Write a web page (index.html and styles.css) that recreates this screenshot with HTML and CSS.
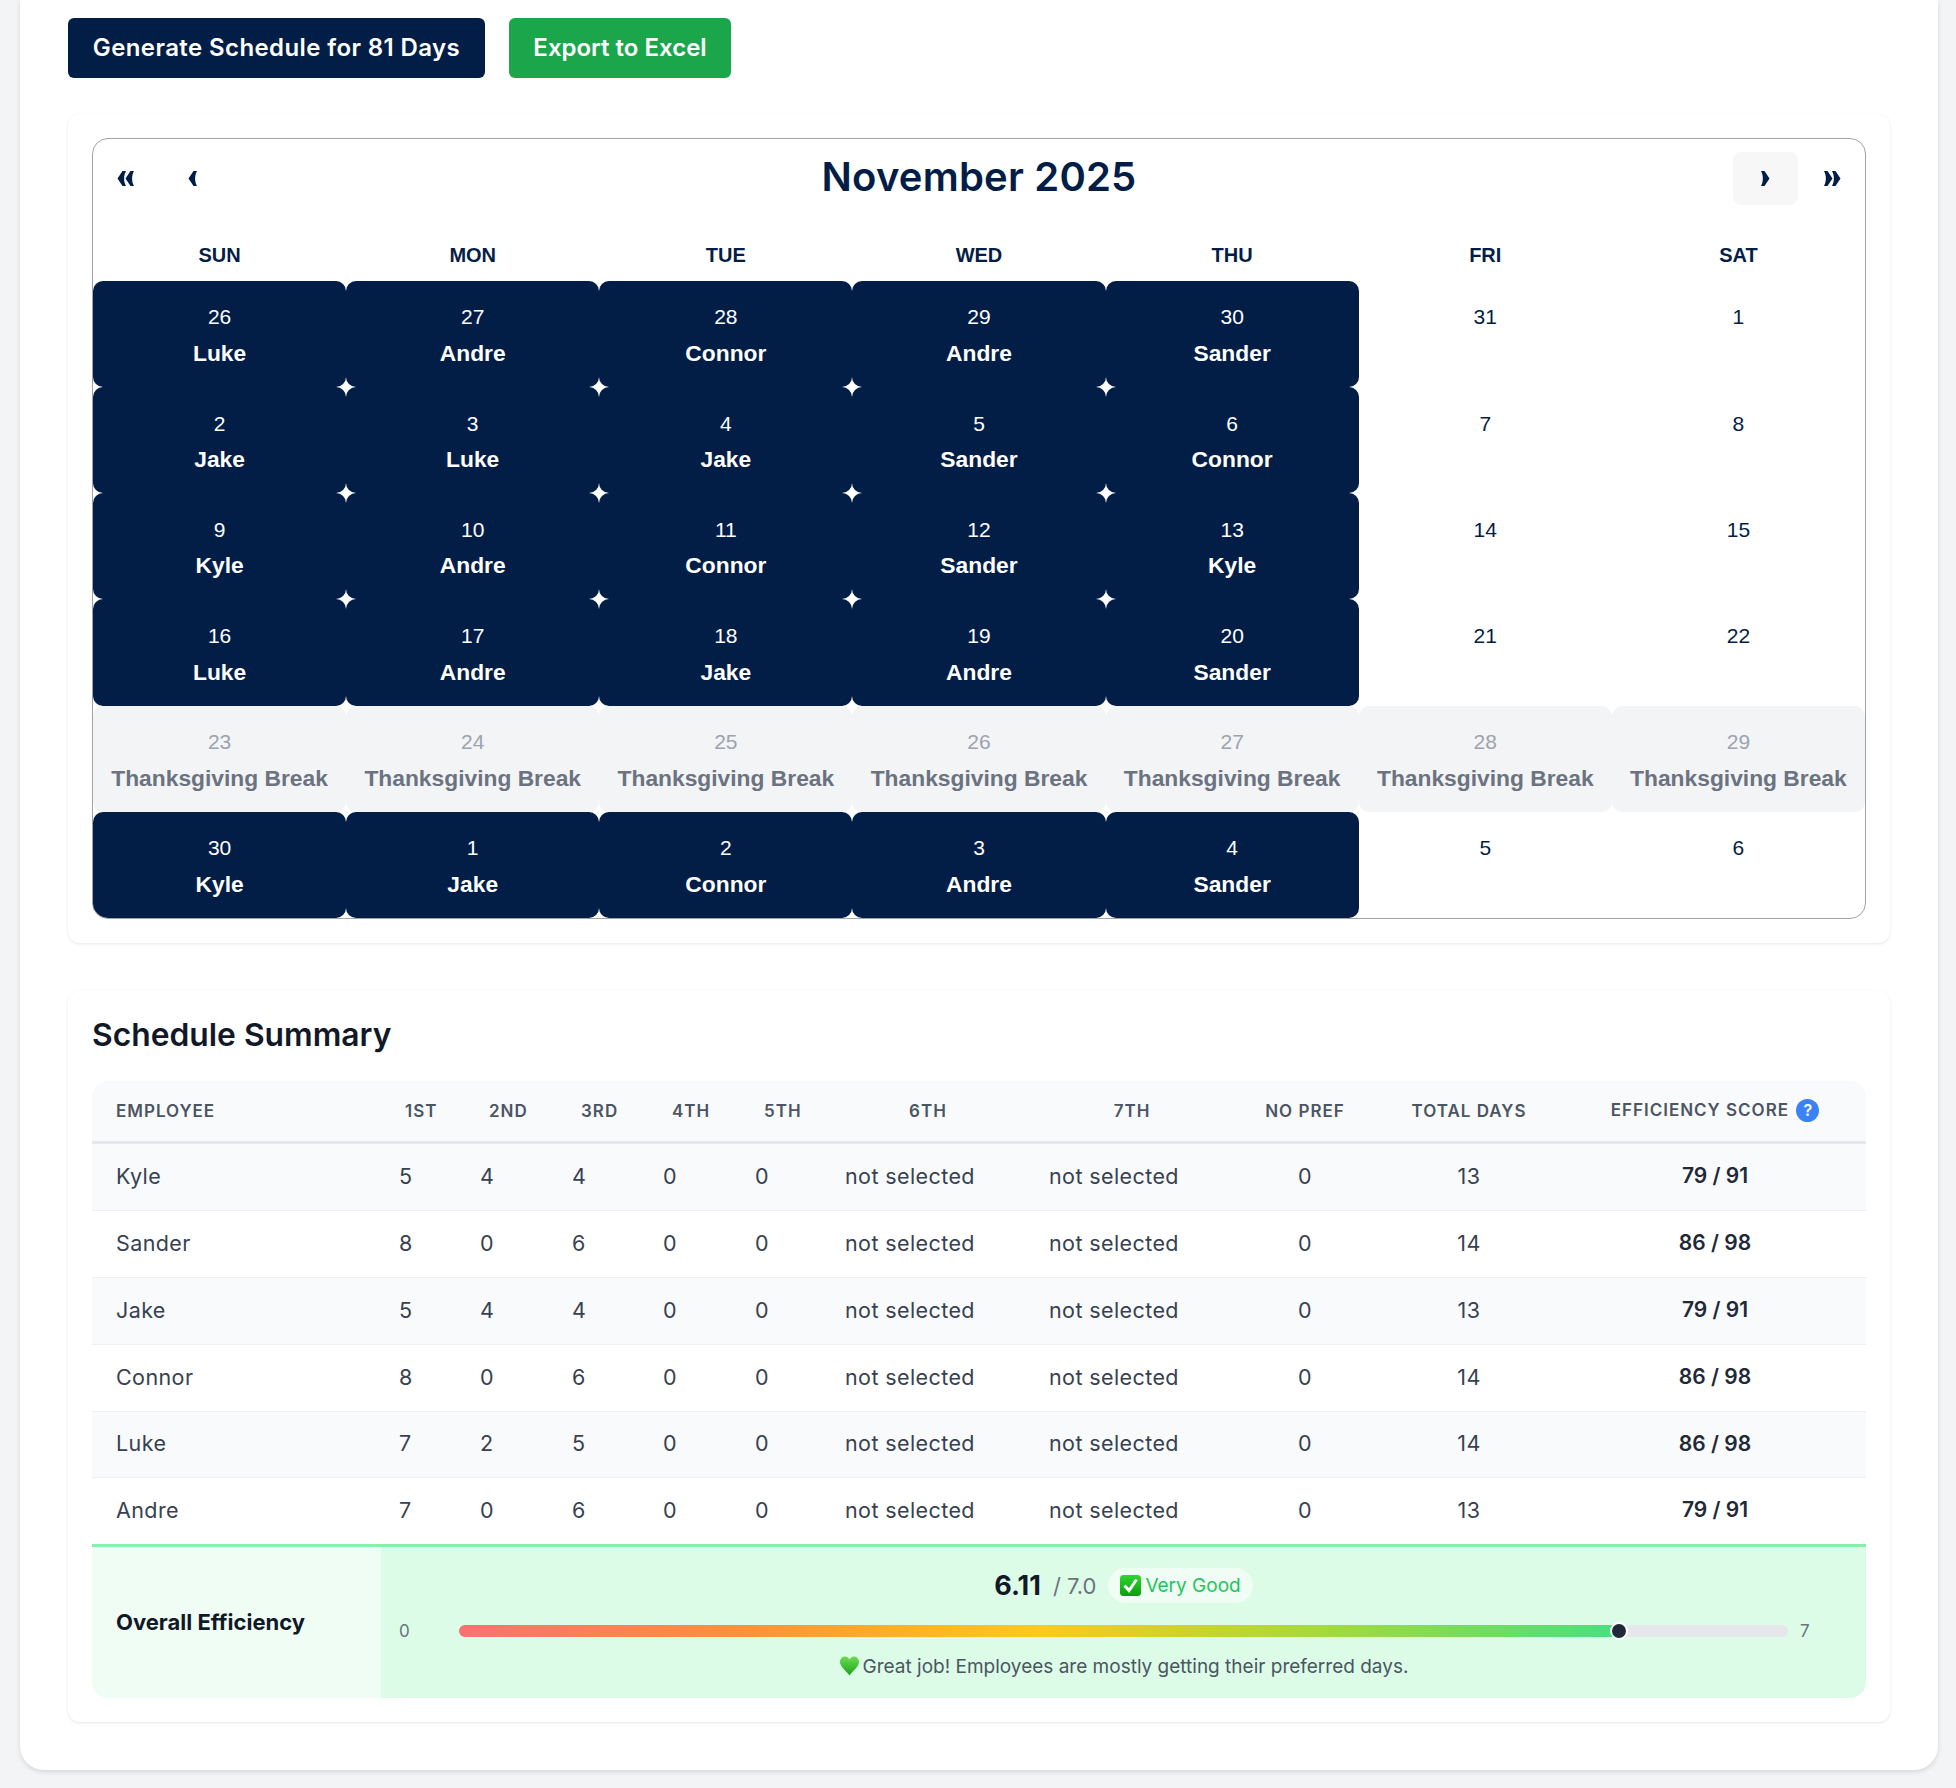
FILE: index.html
```html
<!DOCTYPE html>
<html lang="en">
<head>
    <meta charset="UTF-8">
    <meta name="viewport" content="width=device-width, initial-scale=1.0">
    <title>Schedule</title>
    <link rel="stylesheet" href="styles.css">
</head>
<body>
<div class="page">
    <div class="actions">
        <button class="btn btn-navy">Generate Schedule for 81 Days</button>
        <button class="btn btn-green">Export to Excel</button>
    </div>

    <section class="card">
        <div class="calendar">
            <div class="cal-toolbar">
                <div class="cal-nav">
                    <button class="nav-btn"><svg width="18" height="15" viewBox="0 0 18 15"><path d="M5.500 0 L0.500 7.500 L5.500 15 H9 C6.500 11 6.500 4 9 0Z M13.500 0 L8.500 7.500 L13.500 15 H17 C14.500 11 14.500 4 17 0Z"/></svg></button>
                    <button class="nav-btn"><svg width="10" height="15" viewBox="0 0 10 15"><path d="M5.500 0 L0.500 7.500 L5.500 15 H9 C6.500 11 6.500 4 9 0Z"/></svg></button>
                </div>
                <h2 class="cal-title">November 2025</h2>
                <div class="cal-nav">
                    <button class="nav-btn nav-hover"><svg width="10" height="15" viewBox="0 0 10 15"><path d="M4.500 0 L9.500 7.500 L4.500 15 H1 C3.500 11 3.500 4 1 0Z"/></svg></button>
                    <button class="nav-btn"><svg width="18" height="15" viewBox="0 0 18 15"><path d="M4.500 0 L9.500 7.500 L4.500 15 H1 C3.500 11 3.500 4 1 0Z M12.500 0 L17.500 7.500 L12.500 15 H9 C11.500 11 11.500 4 9 0Z"/></svg></button>
                </div>
            </div>
            <div class="cal-grid">
                <div class="dow">SUN</div><div class="dow">MON</div><div class="dow">TUE</div><div class="dow">WED</div><div class="dow">THU</div><div class="dow">FRI</div><div class="dow">SAT</div>

                <div class="day on"><span>26</span><b>Luke</b></div>
                <div class="day on"><span>27</span><b>Andre</b></div>
                <div class="day on"><span>28</span><b>Connor</b></div>
                <div class="day on"><span>29</span><b>Andre</b></div>
                <div class="day on"><span>30</span><b>Sander</b></div>
                <div class="day"><span>31</span></div>
                <div class="day"><span>1</span></div>

                <div class="day on"><span>2</span><b>Jake</b></div>
                <div class="day on"><span>3</span><b>Luke</b></div>
                <div class="day on"><span>4</span><b>Jake</b></div>
                <div class="day on"><span>5</span><b>Sander</b></div>
                <div class="day on"><span>6</span><b>Connor</b></div>
                <div class="day"><span>7</span></div>
                <div class="day"><span>8</span></div>

                <div class="day on"><span>9</span><b>Kyle</b></div>
                <div class="day on"><span>10</span><b>Andre</b></div>
                <div class="day on"><span>11</span><b>Connor</b></div>
                <div class="day on"><span>12</span><b>Sander</b></div>
                <div class="day on"><span>13</span><b>Kyle</b></div>
                <div class="day"><span>14</span></div>
                <div class="day"><span>15</span></div>

                <div class="day on"><span>16</span><b>Luke</b></div>
                <div class="day on"><span>17</span><b>Andre</b></div>
                <div class="day on"><span>18</span><b>Jake</b></div>
                <div class="day on"><span>19</span><b>Andre</b></div>
                <div class="day on"><span>20</span><b>Sander</b></div>
                <div class="day"><span>21</span></div>
                <div class="day"><span>22</span></div>

                <div class="day off"><span>23</span><b>Thanksgiving Break</b></div>
                <div class="day off"><span>24</span><b>Thanksgiving Break</b></div>
                <div class="day off"><span>25</span><b>Thanksgiving Break</b></div>
                <div class="day off"><span>26</span><b>Thanksgiving Break</b></div>
                <div class="day off"><span>27</span><b>Thanksgiving Break</b></div>
                <div class="day off"><span>28</span><b>Thanksgiving Break</b></div>
                <div class="day off"><span>29</span><b>Thanksgiving Break</b></div>

                <div class="day on"><span>30</span><b>Kyle</b></div>
                <div class="day on"><span>1</span><b>Jake</b></div>
                <div class="day on"><span>2</span><b>Connor</b></div>
                <div class="day on"><span>3</span><b>Andre</b></div>
                <div class="day on"><span>4</span><b>Sander</b></div>
                <div class="day"><span>5</span></div>
                <div class="day"><span>6</span></div>
            </div>
        </div>
    </section>

    <section class="card summary">
        <h2 class="summary-title">Schedule Summary</h2>
        <div class="table-wrap">
            <table class="summary-table">
                <colgroup>
                    <col class="c-name"><col class="c1"><col class="c2"><col class="c3"><col class="c4"><col class="c5"><col class="c6"><col class="c7"><col class="c8"><col class="c9"><col class="c10">
                </colgroup>
                <thead>
                    <tr>
                        <th>Employee</th><th>1st</th><th>2nd</th><th>3rd</th><th>4th</th><th>5th</th>
                        <th class="th-pick">6th</th><th class="th-pick th-seven">7th</th>
                        <th class="mid">No Pref</th><th class="mid">Total Days</th>
                        <th class="mid">Efficiency Score <span class="help">?</span></th>
                    </tr>
                </thead>
                <tbody>
                    <tr><td>Kyle</td><td>5</td><td>4</td><td>4</td><td>0</td><td>0</td><td class="ns">not selected</td><td class="ns">not selected</td><td class="mid">0</td><td class="mid">13</td><td class="mid score">79 / 91</td></tr>
                    <tr><td>Sander</td><td>8</td><td>0</td><td>6</td><td>0</td><td>0</td><td class="ns">not selected</td><td class="ns">not selected</td><td class="mid">0</td><td class="mid">14</td><td class="mid score">86 / 98</td></tr>
                    <tr><td>Jake</td><td>5</td><td>4</td><td>4</td><td>0</td><td>0</td><td class="ns">not selected</td><td class="ns">not selected</td><td class="mid">0</td><td class="mid">13</td><td class="mid score">79 / 91</td></tr>
                    <tr><td>Connor</td><td>8</td><td>0</td><td>6</td><td>0</td><td>0</td><td class="ns">not selected</td><td class="ns">not selected</td><td class="mid">0</td><td class="mid">14</td><td class="mid score">86 / 98</td></tr>
                    <tr class="short"><td>Luke</td><td>7</td><td>2</td><td>5</td><td>0</td><td>0</td><td class="ns">not selected</td><td class="ns">not selected</td><td class="mid">0</td><td class="mid">14</td><td class="mid score">86 / 98</td></tr>
                    <tr class="short"><td>Andre</td><td>7</td><td>0</td><td>6</td><td>0</td><td>0</td><td class="ns">not selected</td><td class="ns">not selected</td><td class="mid">0</td><td class="mid">13</td><td class="mid score">79 / 91</td></tr>
                </tbody>
                <tfoot>
                    <tr>
                        <td class="eff-label">Overall Efficiency</td>
                        <td class="eff-cell" colspan="10">
                            <div class="eff-head">
                                <strong class="eff-value">6.11</strong>
                                <span class="eff-max">/ 7.0</span>
                                <span class="eff-pill">
                                    <svg width="21" height="21" viewBox="0 0 21 21">
                                        <defs><linearGradient id="boxGreen" x1="0" y1="0" x2="0" y2="1"><stop offset="0" stop-color="#2fd62f"/><stop offset="1" stop-color="#0a9e0a"/></linearGradient></defs>
                                        <rect x="0" y="0" width="21" height="21" rx="3.500" fill="url(#boxGreen)"/>
                                        <path d="M4.500 10.500 L9 15.500 L16.500 4.500" fill="none" stroke="#ffffff" stroke-width="3"/>
                                    </svg>
                                    Very Good
                                </span>
                            </div>
                            <div class="eff-bar">
                                <span class="bar-end bar-start">0</span>
                                <div class="track">
                                    <div class="fill" style="width: 87.3%"><i class="dot"></i></div>
                                </div>
                                <span class="bar-end">7</span>
                            </div>
                            <p class="eff-note">
                                <svg width="21" height="20" viewBox="0 0 20 20">
                                    <defs><linearGradient id="heartGreen" x1="0" y1="0" x2="0" y2="1"><stop offset="0" stop-color="#6fdc55"/><stop offset="1" stop-color="#17a417"/></linearGradient></defs>
                                    <path d="M10 19.500 C7 15 0.500 11 0.500 6 C0.500 2.500 3 0.500 5.500 0.500 C7.500 0.500 9 1.500 10 3.500 C11 1.500 12.500 0.500 14.500 0.500 C17 0.500 19.500 2.500 19.500 6 C19.500 11 13 15 10 19.500Z" fill="url(#heartGreen)"/>
                                </svg>
                                Great job! Employees are mostly getting their preferred days.
                            </p>
                        </td>
                    </tr>
                </tfoot>
            </table>
        </div>
    </section>
</div>
</body>
</html>
```

FILE: styles.css
```css
* {
    box-sizing: border-box;
}
html, body {
    height: 100%;
}
body {
    margin: 0;
    background-color: #f3f4f6;
    font-family: Inter, "Noto Sans", sans-serif;
    color: #111827;
}
.page {
    margin: 0 18px 0 20px;
    padding: 18px 48px 48px;
    background-color: #ffffff;
    border-radius: 0 0 24px 24px;
    box-shadow: 0 2px 5px rgba(0, 0, 0, 0.12);
}

/* top buttons */
.actions {
    display: flex;
    gap: 24px;
    margin-bottom: 36px;
}
.btn {
    height: 60px;
    padding: 0 0 2px;
    border: 0;
    border-radius: 6px;
    color: #ffffff;
    font-family: inherit;
    font-size: 24px;
    font-weight: 600;
}
.btn-navy {
    background-color: #021e47;
    width: 417px;
    letter-spacing: 0.4px;
}
.btn-green {
    background-color: #1ca64c;
    width: 222px;
}

.card {
    padding: 24px;
    background-color: #ffffff;
    border-radius: 12px;
    box-shadow: 0 1px 3px rgba(0, 0, 0, 0.1);
}

/* calendar */
.calendar {
    border: 1px solid #a3a3a3;
    border-radius: 16px;
    overflow: hidden;
    font-family: "Liberation Sans", Arial, sans-serif;
}
.cal-toolbar {
    display: flex;
    align-items: center;
    justify-content: space-between;
    height: 78px;
}
.cal-nav {
    display: flex;
    gap: 2px;
}
.nav-btn {
    display: flex;
    align-items: center;
    justify-content: center;
    width: 65px;
    height: 53px;
    padding: 0;
    border: 0;
    border-radius: 8px;
    background: none;
}
.nav-btn svg {
    fill: #021e47;
}
.nav-hover {
    background-color: #f7f7f8;
}
.cal-title {
    margin: 0 0 3px;
    font-family: Inter, sans-serif;
    font-size: 40px;
    font-weight: 600;
    letter-spacing: 0.2px;
    color: #021e47;
}
.cal-grid {
    display: grid;
    grid-template-columns: repeat(7, 1fr);
    grid-template-rows: 64px repeat(6, 106.170px);
}
.dow {
    display: flex;
    align-items: center;
    justify-content: center;
    padding-top: 12px;
    font-size: 20px;
    font-weight: 700;
    color: #021e47;
}
.day {
    display: flex;
    flex-direction: column;
    align-items: center;
    gap: 9.700px;
    padding-top: 23.400px;
    border-radius: 10px;
    color: #021e47;
    font-size: 21px;
    line-height: 26px;
}
.day b {
    font-size: 22.800px;
}
.on {
    background-color: #021e47;
    color: #ffffff;
}
.off {
    background-color: #f3f4f6;
    color: #9ca3af;
}
.off b {
    color: #6b7280;
    white-space: nowrap;
}

/* summary table */
.summary {
    margin-top: 48px;
}
.summary-title {
    margin: 0 0 26px;
    font-size: 31.800px;
    font-weight: 600;
    line-height: 40px;
    color: #111827;
}
.table-wrap {
    border-radius: 16px;
    overflow: hidden;
}
.summary-table {
    width: 100%;
    table-layout: fixed;
    border-collapse: separate;
    border-spacing: 0;
    font-size: 21.500px;
    letter-spacing: 0.4px;
}
.c-name { width: 289px; }
.c1 { width: 84px; }
.c2 { width: 92px; }
.c3 { width: 91px; }
.c4 { width: 92px; }
.c5 { width: 81px; }
.c6 { width: 204px; }
.c7 { width: 211px; }
.c8 { width: 138px; }
.c9 { width: 190px; }
.c10 { width: 302px; }

th {
    height: 63px;
    padding: 0 0 0 24px;
    background-color: #f9fafc;
    border-bottom: 3px solid #e5e7eb;
    color: #4b5563;
    font-size: 17px;
    font-weight: 600;
    letter-spacing: 1px;
    text-align: left;
    text-transform: uppercase;
    white-space: nowrap;
}
th.th-pick {
    padding-left: 10px;
    text-align: center;
}
th.th-seven {
    padding-left: 3px;
}
th.mid {
    padding: 0;
    text-align: center;
}
tbody td {
    height: 67px;
    padding: 0 0 2px 15px;
    border-bottom: 1px solid #edeff2;
    color: #374151;
}
tbody td:first-child {
    padding-left: 24px;
}
tbody td:nth-child(2) {
    padding-left: 18px;
}
tbody td.ns {
    padding-left: 24px;
}
tbody td.mid {
    padding: 0 0 2px;
    text-align: center;
}
tbody td.score {
    color: #1f2937;
    font-size: 21px;
    font-weight: 600;
    letter-spacing: 0;
}
tbody tr:nth-child(odd) td {
    background-color: #f9fafc;
}
tbody tr.short td {
    height: 66px;
}
tbody tr:last-child td {
    border-bottom: 0;
}
.help {
    display: inline-block;
    width: 23px;
    height: 23px;
    margin-left: 2px;
    border-radius: 50%;
    background-color: #3b82f6;
    color: #ffffff;
    font-size: 16px;
    line-height: 23px;
    letter-spacing: 0;
    text-align: center;
}

/* efficiency row */
tfoot td {
    height: 154px;
    border-top: 3px solid #86efac;
    letter-spacing: 0;
}
.eff-label {
    padding-left: 24px;
    background-color: #f0fdf4;
    font-weight: 700;
    font-size: 22px;
    color: #111827;
}
.eff-cell {
    padding: 0;
    background-color: #dcfce7;
    vertical-align: top;
}
.eff-head {
    display: flex;
    align-items: center;
    justify-content: center;
    gap: 12px;
    height: 40px;
    margin-top: 19px;
}
.eff-value {
    font-size: 27px;
    font-weight: 700;
    color: #111827;
}
.eff-max {
    font-size: 22px;
    color: #6b7280;
}
.eff-pill {
    display: flex;
    align-items: center;
    gap: 4px;
    padding: 6px 12px;
    border-radius: 20px;
    background-color: #f0fdf4;
    color: #22c55e;
    font-size: 19px;
}
.eff-bar {
    display: flex;
    align-items: center;
    height: 24px;
    margin-top: 13px;
    padding: 0 54px 0 18px;
}
.bar-end {
    width: 12px;
    font-size: 17px;
    color: #6b7280;
}
.bar-start {
    width: 60px;
}
.track {
    flex: 1;
    height: 12px;
    margin-right: 12px;
    border-radius: 6px;
    background-color: #e5e7eb;
}
.fill {
    position: relative;
    height: 100%;
    border-radius: 6px 0 0 6px;
    background-image: linear-gradient(to right, #f87171, #fb923c 25%, #facc15 50%, #a3d93f 75%, #4ade80);
}
.dot {
    position: absolute;
    top: -3px;
    right: -9px;
    width: 18px;
    height: 18px;
    border: 2px solid #ffffff;
    border-radius: 50%;
    background-color: #1f2937;
}
.eff-note {
    display: flex;
    align-items: center;
    justify-content: center;
    gap: 3px;
    margin: 12px 0 0;
    font-size: 19px;
    color: #4b5563;
}
```
